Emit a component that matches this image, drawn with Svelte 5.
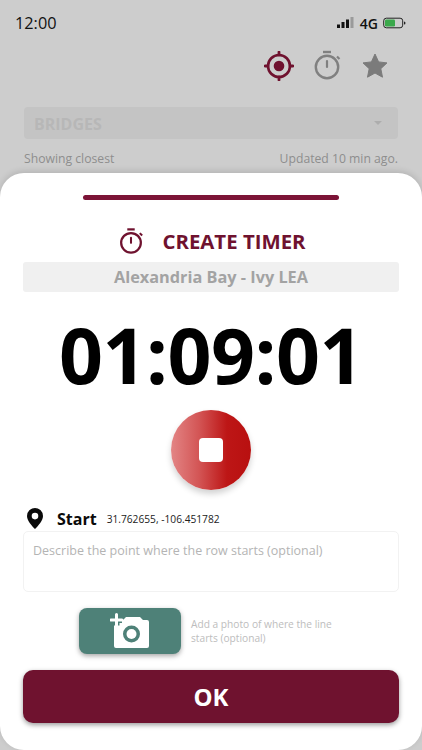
<script lang="ts">
	const maroon = '#6f122f';
	const timerValue = '01:09:01';
	const coords = '31.762655, -106.451782';
</script>

<div class="screen">
	<div class="status">
		<span class="time">12:00</span>
		<div class="status-right">
			<svg width="18" height="12" viewBox="0 0 18 12">
				<rect x="0" y="7.5" width="3" height="3.5" fill="#111" />
				<rect x="4.5" y="5" width="3" height="6" fill="#111" />
				<rect x="9" y="2.5" width="3" height="8.5" fill="#111" />
				<rect x="13.5" y="0" width="3" height="11" fill="#9a9a9a" />
			</svg>
			<span class="net">4G</span>
			<svg width="23" height="12" viewBox="0 0 23 12">
				<rect x="0.7" y="1.2" width="19" height="9.6" rx="2.6" fill="none" stroke="#222" stroke-width="1" />
				<rect x="2" y="2.5" width="10" height="7" rx="1.2" fill="#3aa84b" />
				<path d="M21 4.5 a1.5 1.5 0 0 1 0 3z" fill="#222" />
			</svg>
		</div>
	</div>

	<div class="tabs">
		<svg width="30" height="30" viewBox="0 0 30 30">
			<circle cx="15" cy="15" r="11" fill="none" stroke={maroon} stroke-width="2.6" />
			<circle cx="15" cy="15" r="5.300" fill={maroon} />
			<path d="M15 1v3M15 26v3M1 15h3M26 15h3" stroke={maroon} stroke-width="2.8" stroke-linecap="round" />
		</svg>
		<svg width="30" height="32" viewBox="-1 1 30 32">
			<circle cx="14" cy="18" r="11.2" fill="none" stroke="#808080" stroke-width="2.4" />
			<path d="M10 3h8" stroke="#808080" stroke-width="2.4" />
			<path d="M14 12v6" stroke="#808080" stroke-width="2.2" stroke-linecap="round" />
			<path d="M24 7.5l2.5 2.5" stroke="#808080" stroke-width="2.2" />
		</svg>
		<svg width="30" height="30" viewBox="-2 -2 30 30">
			<path d="M13 1l3.6 7.9 8.4 1-6.2 5.8 1.7 8.5L13 20l-7.5 4.2 1.7-8.5L1 9.9l8.4-1z" fill="#7b7b7b" stroke="#7b7b7b" stroke-linejoin="round" />
		</svg>
	</div>

	<div class="select">
		<span>BRIDGES</span>
		<i class="caret"></i>
	</div>
	<div class="meta">
		<span>Showing closest</span>
		<span>Updated 10 min ago.</span>
	</div>

	<div class="sheet">
		<div class="handle"></div>

		<div class="title">
			<svg width="26" height="28" viewBox="0 0 28 30">
				<circle cx="14" cy="17" r="10.6" fill="none" stroke={maroon} stroke-width="2.4" />
				<path d="M10 2.5h8" stroke={maroon} stroke-width="2.4" />
				<path d="M14 11.5v5.5" stroke={maroon} stroke-width="2.2" stroke-linecap="round" />
				<path d="M23.5 6.5l2.5 2.5" stroke={maroon} stroke-width="2.2" />
			</svg>
			<span>CREATE TIMER</span>
		</div>

		<div class="place">Alexandria Bay - Ivy LEA</div>

		<div class="clock">{timerValue}</div>

		<button class="stop" aria-label="Stop"><i></i></button>

		<div class="start-row">
			<svg width="16" height="21" viewBox="0 0 16 21">
				<path fill-rule="evenodd" d="M8 0a8 8 0 0 1 8 8c0 4.600-4.600 9.500-8 13C4.600 17.500 0 12.600 0 8a8 8 0 0 1 8-8zm0 4.800a3.300 3.300 0 1 0 0 6.600 3.300 3.300 0 0 0 0-6.600z" fill="#0a0a0a" />
			</svg>
			<b>Start</b>
			<span>{coords}</span>
		</div>

		<div class="describe">Describe the point where the row starts (optional)</div>

		<div class="photo-row">
			<button class="photo" aria-label="Add photo">
				<svg width="42" height="38" viewBox="0 0 42 38">
					<path fill-rule="evenodd" d="M4 8h9l3-3h14l3 3h4a2 2 0 0 1 2 2v24a2 2 0 0 1-2 2H6a2 2 0 0 1-2-2zM21.500 13.500a8.500 8.500 0 1 0 0 17 8.500 8.500 0 0 0 0-17z" fill="#fff" />
					<circle cx="21.500" cy="22" r="5" fill="#fff" />
					<path d="M6.500 2.500v11M1 8h11" stroke="#4e8178" stroke-width="6" />
					<path d="M6.500 2.500v11M1 8h11" stroke="#fff" stroke-width="3" stroke-linecap="round" />
				</svg>
			</button>
			<p>Add a photo of where the line starts (optional)</p>
		</div>

		<button class="ok">OK</button>
	</div>
</div>

<style>
	:global(body) {
		margin: 0;
		background: #cdcdcd;
	}

	.screen {
		position: relative;
		width: 422px;
		height: 750px;
		overflow: hidden;
		background: #cdcdcd;
		font-family: 'Open Sans', sans-serif;
		box-sizing: border-box;
		padding: 0 24px;
	}

	.status {
		display: flex;
		justify-content: space-between;
		align-items: center;
		height: 46px;
		margin: 0 -8px 0 -9px;
		color: #111;
	}
	.time {
		font-size: 16.300px;
		font-weight: 500;
	}
	.status-right {
		display: flex;
		align-items: center;
		gap: 4px;
	}
	.net {
		font-size: 14px;
		font-weight: 600;
		margin: 0 1px;
	}

	.tabs {
		display: flex;
		justify-content: flex-end;
		align-items: center;
		gap: 18px;
		height: 40px;
		padding-right: 8px;
	}

	.select {
		display: flex;
		justify-content: space-between;
		align-items: center;
		height: 32px;
		margin-top: 21px;
		padding: 0 16px 0 10px;
		background: #c4c4c4;
		border-radius: 4px;
		color: #b7b7b7;
		font-size: 16px;
		font-weight: 700;
	}
	.select span {
		padding-top: 2px;
	}
	.caret {
		width: 0;
		height: 0;
		border-left: 4.500px solid transparent;
		border-right: 4.500px solid transparent;
		border-top: 4.500px solid #adadad;
	}

	.meta {
		display: flex;
		justify-content: space-between;
		margin-top: 11px;
		font-size: 12.200px;
		line-height: 18px;
		color: #8e8e8e;
	}

	.sheet {
		position: absolute;
		left: 0;
		right: 0;
		top: 173px;
		bottom: 0;
		box-sizing: border-box;
		padding: 22px 23px 0;
		display: flex;
		flex-direction: column;
		background: #fff;
		border-radius: 24px;
		box-shadow: 0 -2px 6px rgba(0, 0, 0, 0.12);
	}

	.handle {
		align-self: center;
		width: 256px;
		height: 5px;
		background: #7c1437;
		border-radius: 3px;
	}

	.title {
		display: flex;
		justify-content: center;
		align-items: center;
		gap: 18px;
		height: 30px;
		margin-top: 26px;
		margin-left: 2px;
		color: #6f122f;
		font-size: 20.400px;
		font-weight: 700;
	}

	.place {
		height: 30px;
		margin-top: 6px;
		line-height: 30px;
		text-align: center;
		background: #f0f0f0;
		border-radius: 3px;
		color: #a3a3a3;
		font-size: 16.300px;
		font-weight: 700;
	}

	.clock {
		height: 90px;
		margin-top: 18px;
		line-height: 90px;
		text-align: center;
		color: #000;
		font-size: 77px;
		font-weight: 700;
		letter-spacing: -0.5px;
	}

	.stop {
		align-self: center;
		display: flex;
		justify-content: center;
		align-items: center;
		width: 80px;
		height: 80px;
		margin-top: 10px;
		padding: 0;
		border: 0;
		border-radius: 50%;
		background: linear-gradient(90deg, #e38585 0%, #d35555 35%, #bd1616 70%, #b81010 100%);
		box-shadow: 0 4px 6px rgba(0, 0, 0, 0.18);
	}
	.stop i {
		display: block;
		width: 24px;
		height: 24px;
		background: #fff;
		border-radius: 4px;
	}

	.start-row {
		display: flex;
		align-items: center;
		height: 22px;
		margin-top: 17px;
		padding-left: 4px;
		color: #0a0a0a;
	}
	.start-row b {
		margin: 2px 0 0 14px;
		font-size: 16px;
		font-weight: 700;
	}
	.start-row span {
		margin: 2px 0 0 10px;
		font-size: 10.200px;
		color: #222;
	}

	.describe {
		box-sizing: border-box;
		height: 61px;
		margin-top: 2px;
		padding: 10px 9px;
		border: 1px solid #f2f2f2;
		border-radius: 5px;
		color: #b4b4b4;
		font-size: 12.500px;
		line-height: 18px;
	}

	.photo-row {
		display: flex;
		align-items: center;
		height: 46px;
		margin-top: 16px;
		padding-left: 56px;
	}
	.photo {
		display: flex;
		justify-content: center;
		align-items: center;
		width: 102px;
		height: 46px;
		padding: 0 0 0 2px;
		border: 0;
		border-radius: 8px;
		background: #4e8178;
		box-shadow: 0 2px 5px rgba(0, 0, 0, 0.35);
	}
	.photo-row p {
		width: 150px;
		margin: 0 0 0 10px;
		font-size: 10.200px;
		line-height: 14px;
		color: #bdbdbd;
	}

	.ok {
		height: 53px;
		margin-top: 16px;
		padding: 0;
		border: 0;
		border-radius: 10px;
		background: #6f122f;
		box-shadow: 0 2px 5px rgba(0, 0, 0, 0.4);
		color: #fff;
		font-family: inherit;
		font-size: 24px;
		font-weight: 700;
	}
</style>
